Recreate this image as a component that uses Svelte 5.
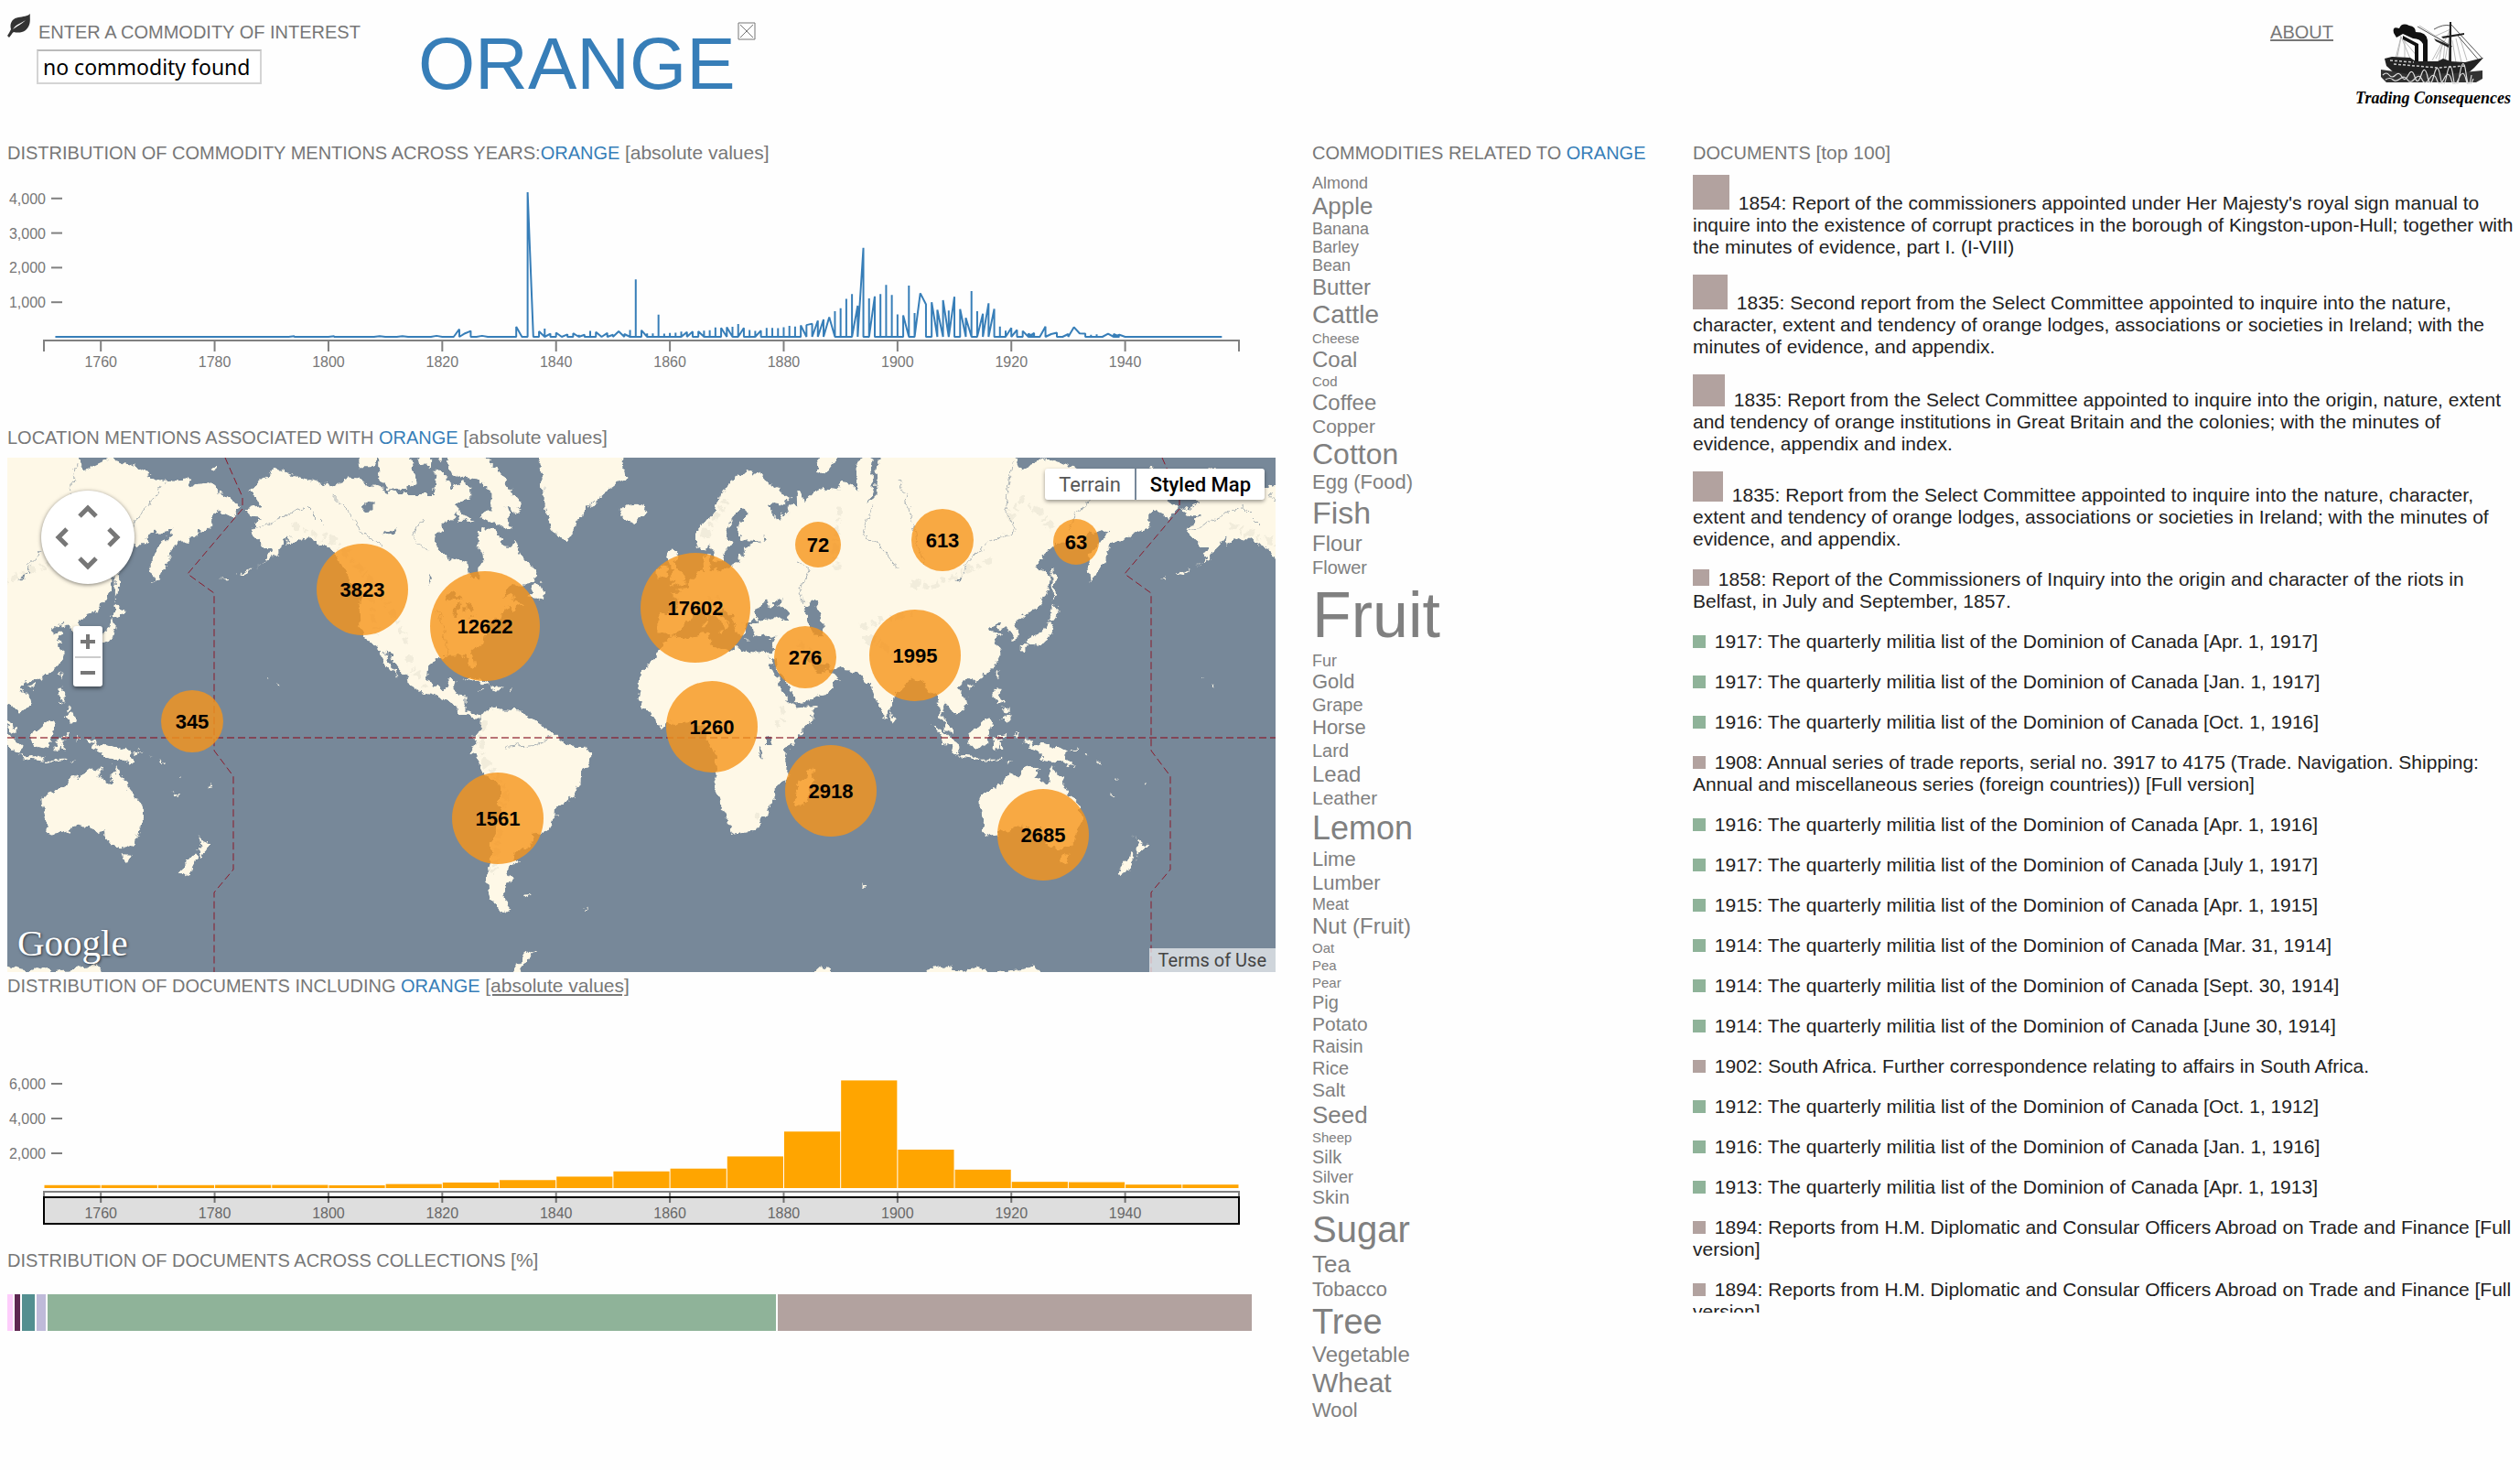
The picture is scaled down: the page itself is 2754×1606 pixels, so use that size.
<script>
	let query = $state('no commodity found');
	const commodity = 'ORANGE';

	const W = 1386;
	const LEFT = 40;
	const YEAR = 1306 / 210;
	const decades = [1760, 1780, 1800, 1820, 1840, 1860, 1880, 1900, 1920, 1940];

	function yearX(year) { return LEFT + (year - 1750) * YEAR; }
	function thousands(n) { return n.toLocaleString('en-US'); }

	// mentions per year: [year, count, shape]
	// shape: i = slopes up from the year before, o = slopes down to the next one,
	// l = plain line point, d = line point that then drops to zero
	const mentions = [
		[1794, 20, 'i'], [1801, 20, 'i'], [1809, 20, 'io'], [1813, 20, 'io'], [1819, 30, 'io'],
		[1823, 220, 'i'], [1824, 100, 'l'], [1825, 170, 'd'], [1827, 30, 'io'], [1833, 290, 'o'],
		[1835, 4180, 'o'], [1837, 160, 'o'], [1838, 240], [1839, 90, 'i'], [1840, 120, 'o'], [1842, 70, 'i'],
		[1843, 100, 'o'], [1844, 60], [1845, 60, 'i'], [1846, 170], [1847, 140, 'o'], [1849, 110, 'i'],
		[1850, 60, 'i'], [1851, 160, 'io'], [1852, 80, 'o'], [1853, 200], [1854, 1660], [1855, 190, 'o'],
		[1856, 100], [1857, 100], [1858, 640], [1859, 90], [1860, 110], [1861, 120], [1862, 150],
		[1863, 140, 'i'], [1864, 150, 'i'], [1865, 160, 'o'], [1866, 180], [1867, 190], [1868, 270],
		[1869, 260, 'o'], [1870, 280, 'o'], [1871, 290], [1872, 370], [1873, 260, 'i'], [1874, 200],
		[1875, 170], [1876, 180, 'i'], [1877, 260], [1878, 260], [1879, 250], [1880, 280], [1881, 320],
		[1882, 300], [1883, 330, 'o'], [1884, 340, 'l'], [1885, 380, 'd'], [1886, 470, 'i'], [1887, 500, 'i'],
		[1888, 570, 'io'], [1889, 740], [1890, 830], [1891, 1100], [1892, 1240], [1893, 900, 'i'],
		[1894, 2570, 'i'], [1895, 1110], [1896, 1170, 'i'], [1897, 1240], [1898, 1500], [1899, 1210],
		[1900, 650], [1901, 620, 'o'], [1902, 1480], [1903, 690], [1904, 1260, 'l'], [1905, 940, 'd'],
		[1906, 1000, 'o'], [1907, 780, 'o'], [1908, 1060, 'o'], [1909, 760], [1910, 1160, 'i'],
		[1911, 800, 'o'], [1912, 550, 'o'], [1913, 1320], [1914, 740], [1915, 670, 'i'], [1916, 970, 'i'],
		[1917, 810, 'i'], [1918, 300], [1919, 180], [1920, 260, 'i'], [1921, 200, 'i'], [1922, 170, 'o'],
		[1923, 90, 'o'], [1924, 110, 'i'], [1926, 300, 'i'], [1927, 80, 'l'], [1928, 120, 'd'],
		[1930, 80, 'i'], [1931, 280, 'l'], [1932, 100, 'l'], [1933, 90, 'd'], [1934, 60], [1935, 70],
		[1937, 90, 'io'], [1938, 80, 'o'], [1939, 60, 'io']
	];

	function mentionY(n) { return 189 - n * 0.0378; }

	const mentionPath = mentions.reduce((path, [year, n, shape = '']) => {
		const x = yearX(year);
		if (shape.includes('i')) path += `L${yearX(year - 1)},189`;
		else if (shape === '' || shape === 'o') path += `L${x},189`;
		path += `L${x},${mentionY(n)}`;
		if (shape === 'l') return path;
		return path + `L${shape.includes('o') ? yearX(year + 1) : x},189`;
	}, `M${yearX(1752)},189`) + `L${yearX(1957)},189`;

	// documents per decade from 1750 on
	const documentCounts = [
		170, 170, 170, 180, 180, 160, 230, 320, 460, 660, 960,
		1120, 1820, 3250, 6190, 2210, 1060, 360, 340, 200, 200
	];

	const collections = [
		{ color: '#fdcdfb', share: 6 },
		{ color: '#5e2751', share: 6 },
		{ color: '#538f90', share: 14 },
		{ color: '#bfbad9', share: 10 },
		{ color: '#8fb399', share: 796 },
		{ color: '#b2a29f', share: 518 }
	];

	const clusters = [
		[388, 144, 50, 3823], [522, 184, 60, 12622], [202, 288, 34, 345], [536, 394, 50, 1561],
		[752, 164, 60, 17602], [770, 294, 50, 1260], [886, 95, 25, 72], [1022, 90, 34, 613],
		[1168, 92, 25, 63], [872, 218, 34, 276], [992, 216, 50, 1995], [900, 364, 50, 2918],
		[1132, 412, 50, 2685]
	];

	// lon,lat outlines
	const land = [
		// Eurasia
		'-9,38.7 -9,43 -2,43.5 -1.2,45 -2,47 -4.6,48.4 -1.5,48.6 -1.5,49.7 1.5,50.1 2,51 4,52 5,53.4 8.5,53.7 8.2,56.5 10.5,57.7 10.5,56 10,54.5 14,54 18.5,54.8 21,55.5 21.5,57.5 24,57.2 23.5,58.8 28,59.6 30,60 25,60.2 22.5,60 21.3,61.5 21.5,63 25.3,65 22,65.8 21,64.8 17.5,62.3 17.2,60.7 18.8,59.8 16.5,58 15.8,56.2 14.2,55.4 12.8,55.5 11.3,58.5 10.5,59.3 8,58.1 5.5,58.8 5,61.8 8.5,63.5 12,65.2 14.5,68 18,69.6 24,71 31,70.4 33,69.4 41,67.5 40,66.2 33,66.6 34.8,64.4 37,64 38,64.8 40.5,64.6 39.8,65.8 42,66.4 44,66 43.8,68.4 46,68.1 46.5,66.8 54,68.8 60,68.5 61,69.8 65,69.3 68,68.3 67,70 67,72 70,73 73,72.5 72.5,71 73.5,68.5 71,66.5 74,67.5 75,72 80,73.5 87,75 100,77 105,77.7 113,76 114,73.8 120,73 127,73.2 130,71 133,71.6 140,72.6 150,71.5 160,69.7 170,70 171,69 178,69.4 180,69 185,67.5 190.3,66.1 187,64.3 181,65.5 179,64.6 179,62.5 174,61.8 170,60 166,60 163,58 163,56 161,55 156.7,51 156,54 156,57 160,59.5 164,62.2 160,61.7 156,61.6 154,59.5 149,59.5 143,59.3 138,57 135.5,54.7 141,53 140.5,50 139,47 135.5,44 131.5,43 130,42 127.5,39.7 129.3,37 129,35.2 126.3,34.6 126.8,37 125,38 125,39.6 121.5,39 122,40.5 119,39.3 118,38.5 119,37.3 122.4,37.2 119.5,35 121.8,32 121.8,30 121,28 118,24.5 114,22.4 110.5,21.2 108,21.6 106,20 105.8,18.8 108.5,16 109.3,12.5 107,10.5 105,8.8 105,10 103,11 101.5,12.7 100.5,13.4 100,12 99.3,9.3 100.5,7.2 103.3,4 104.2,1.4 101,3 100.3,6 98.5,8 98.6,12 97.6,16.5 95,15.8 94.3,18 92,21.5 91,22.5 88,21.7 86.8,20.5 82,16.6 80.2,15.5 80.2,13 79.8,10.4 77.6,8.1 76,11 74.5,14.5 73,18 72.7,21 70,20.9 69,22.3 67,24.8 61.5,25.2 57.3,25.6 56.5,27 52.5,27.5 50,30 48,30 48.3,28 50.2,26.5 51.5,25.8 51.5,24.2 54,24.1 56.3,26 56.8,24 59.8,22.5 57.8,19 55,17 52,15.6 45,12.8 43.3,12.8 42.7,16.5 39.2,21 37,25 34.8,28.2 34.5,29.5 34.3,31.3 35,33 36,36.8 34,36.4 30.5,36.4 27.5,37 26.3,39.4 29,41 31.5,41.3 35,42 38.5,41 41.5,41.6 39,44 37,45.3 39,47.2 35,46.2 36.5,45.4 33.5,44.5 32.6,45.5 33.5,46.1 31,46.6 29.7,45.2 28,43 28.8,41.3 26,40.8 23.5,40.4 24,38 22.8,36.5 21.5,37 19.4,41 19.5,42 15.5,44 13.7,45.4 12.3,45.2 12.5,44 14,42.4 16,41.8 18.4,40 16.8,40.4 17,39 16,38 15.7,40 12.3,41.8 10.5,43 8.8,44.4 6.5,43.1 3.2,43.2 3.2,41.8 0,39.7 0,38.6 -2,36.8 -5.5,36.1 -6.5,37 -9,37',
		// Africa
		'-6,35.8 0,36 10,37.3 11,35 10.3,34 15,32.3 20,31 20,32.8 25,31.6 31,31.5 32.4,31 34.3,31.3 34.6,29.5 34.2,27.8 32.8,29.8 34,27 37,21 37.4,18.8 39.5,15.5 43,12.3 43.5,11.4 51.2,11.9 50.5,9 48,4.5 43,-0.5 39.5,-4.5 39,-7 40.6,-11 40.5,-15 35,-19.8 35.5,-24 33,-25.8 32.5,-28.5 28,-33 25.6,-34 20,-34.8 18.4,-34 17.5,-30.5 15,-26.5 14.4,-22.5 12,-17.5 13.7,-12 12.2,-6 9,-1 9.5,3.5 8.5,4.6 6,4.3 4.3,6.4 1,6 -4,5.3 -7.5,4.4 -13,8.5 -15,11 -17,14.7 -16.2,19 -17,21 -14.5,26 -10,29.3 -9.7,31.5 -6.8,34',
		'49.3,-12 50.4,-15.5 47,-25 44,-25 43.5,-22 44.4,-16.2 47.5,-15',
		// North America
		'-168,65.6 -162,66.3 -164,67.5 -166.5,68.3 -163,69.5 -157,71.3 -150,70.5 -141,69.7 -135,69 -128,70 -124,69.8 -115,68.5 -109,68 -100,68 -96,68 -95,71 -92,71 -88,68.7 -85,69.8 -81.5,69 -81.5,67.3 -86.5,66.3 -87,64.8 -92,63 -94.5,60.5 -94.7,58.8 -92.5,57 -88,56.5 -82.5,55.2 -82,53 -79,51.4 -79,54.5 -76.6,57 -78.5,59 -77.5,62.4 -73.5,62.3 -69.7,61 -69.5,59 -66,58.8 -64.5,60.3 -61.5,57 -57.5,54.5 -56,52 -60,50.2 -66.5,50.2 -70,47.5 -65,49 -64.8,46.5 -61.5,45.8 -66,43.5 -66.5,45 -70,43.7 -70.5,41.8 -74,40.6 -75.5,38 -76,35 -81,31.8 -80.1,26.5 -81,25.2 -82.7,28 -84,30 -89.5,30 -94,29.5 -97.3,27.5 -97.7,22.5 -95.5,18.7 -91,18.6 -90.3,21 -87,21.4 -88.2,16 -83.5,15.5 -83.5,11 -81.5,9 -79.5,9.5 -77.3,8.5 -78,7.5 -80.3,7.5 -83,8.3 -85.7,10 -87.7,13 -92,14.5 -95,16 -99,16.7 -105.3,20 -105.5,22.5 -109.3,26 -113,31 -114.8,31.6 -111,25.5 -109.5,23 -112,25 -115,28 -116.8,32 -120.5,34.5 -124,39.5 -124.3,46.5 -123,49 -127.5,51 -130.3,54.6 -134,58 -139.5,59.7 -146,60.8 -151.5,59.2 -151,61.2 -154,59 -158,56.5 -164,54.6 -160,56 -157.5,58.8 -162,58.8 -162,60 -166,61.7 -164.5,63.1 -161,64.4 -166,64.5',
		'-117,73 -105,73 -102,69.5 -106,68.8 -113,68.6 -117,70',
		'-125,74 -116,73.5 -119,71.5 -124,71.5',
		'-90,74 -80,74 -72,71.5 -67,69 -62,66.7 -64,65 -68,66 -65,62 -69,62.5 -78,64.5 -73,65.5 -73,68 -79,70 -88,70.3 -90,72',
		'-87,65.5 -80,63.8 -86,63.7',
		'-102,73.5 -97,73.5 -97,71.5 -101,72',
		'-95.5,73.8 -90.5,73.8 -93,72',
		'-56,74 -54,70.5 -53.5,67 -50,62 -44,59.9 -41,63 -37,65.7 -30,68 -22,70.2 -23,72 -20,75 -56,75',
		'-24,65.5 -22,66.3 -16,66.4 -13.7,65 -18.5,63.4 -22.5,63.9',
		'-59,47.7 -56,51.5 -53,48.5 -53.5,46.7',
		'-85,22 -82,23.2 -77,21.5 -74.3,20.2 -77.5,19.9 -78,20.8 -82,22.5',
		'-74,18.4 -73,19.9 -68.5,18.6 -71.5,17.7',
		'-78.3,18.4 -76.3,18.1 -77.3,17.8',
		'-67.2,18.5 -65.7,18.4 -67,17.9',
		'-156,20.2 -154.9,19.5 -155.7,18.9',
		'-160,22.2 -159.3,22 -159.8,21.7',
		// Aleutians
		'-165,54.6 -168,53.6 -171,52.8 -168,53',
		'-174,52.4 -177,52 -174,52',
		// South America
		'-77.3,8.5 -75.5,10.7 -72,12 -71,11 -68,11 -62,10.7 -60,8.3 -57,6 -51.5,4.3 -50,1 -48,-1 -44,-2.5 -39.5,-3 -35.2,-5.5 -35,-9 -39,-13 -39.2,-18 -41,-22 -44.5,-23.2 -48.5,-26 -48.7,-28.5 -52,-33 -54.5,-34.9 -58,-34 -57,-36.5 -58,-38.3 -62,-39 -65,-41 -63.7,-42.6 -67.5,-46 -65.8,-47.5 -69,-51 -68.5,-52.5 -65.2,-54.8 -70,-55.3 -74,-52.5 -75.5,-48 -73.5,-42 -73.5,-37.2 -71.5,-32 -70.3,-24 -70.3,-18.3 -76,-14 -79,-8 -81.3,-5 -80,-2.5 -80.3,0.5 -77.5,4 -77.5,7',
		'-61,-51.5 -58,-51.4 -60,-52.3',
		'-38,-54 -36,-54.4 -36,-54.9',
		// British Isles and the Mediterranean
		'-5.5,50.1 1.2,51.2 1.7,52.7 0,53.5 -3,56 -2,57.6 -4,58.6 -5.5,57.5 -5,55 -3,54 -4.5,53 -5,51.8 -3,51.4',
		'-10,51.6 -6.3,52.3 -6,54.5 -7.5,55.2 -10,54',
		'12.5,38 15.5,38.2 15,36.8',
		'8.3,40.8 9.6,41 9.5,39.2 8.5,39',
		'8.7,42.5 9.4,43 9.2,41.5',
		'23.6,35.4 26.2,35.2 24.8,35',
		'32.4,35 34.5,35.6 33,34.6',
		'51.5,71 55,70.7 58,72 62,74.5 56,74.5 53,72.5',
		// Asian islands
		'131,34 136,33.6 140,35 141,36 142,39.5 141,41.4 140,40 139.5,38.5 137,37 133,35.5',
		'140.3,41.5 143.2,42 145.5,43.3 142,45.4 141.3,43',
		'130,33.5 132,33.3 131,31.2 130,32',
		'142,46 143,49 143.2,52 142.8,54.3 141.8,53 142,49',
		'178.5,71.2 182,71.4 181,70.9',
		'120,23.5 121.5,25.2 121,22',
		'108.7,19.5 111,20 110,18.3',
		'120.5,18.5 122.2,18.4 121.8,15.5 124,13 120.7,13.8 120,16',
		'122,7 125.5,9.7 126.5,7 125.3,5.7 124,7',
		'123,11 125,12 125,10.5 123.5,9.5',
		'109,1.5 111,2.5 113,3.3 117,7 119,5.2 117.7,1 116,-3.8 114,-3.6 110.2,-2.8',
		'95.3,5.6 98,4 100.5,2 103.5,-1 106,-3 105.8,-5.8 104,-5.5 100.5,-1.5 98.7,1.7',
		'105.3,-6.8 108.5,-6.7 112.5,-6.9 114.5,-8 114,-8.7 108,-7.8',
		'119,-3.3 120,0.8 125,1.5 123.5,0.4 120.5,0.4 121.5,-1 123.3,-1 121.7,-2 123,-5 121.5,-4.8 120.7,-2.8 120.3,-5.5 119.5,-5.5',
		'115,-8.3 119,-8.3 122.8,-8.3 122.8,-8.9 115,-8.9',
		'124,-10 127,-8.4 125,-8.8',
		'127.5,1.4 128.6,1 128,-0.8',
		'80,9.7 81.8,7.5 80.5,6 79.8,8',
		// Oceania
		'131,-1 134,-0.8 135,-3.3 138,-1.7 145,-4.3 147.8,-6 147,-7 150.5,-10.5 147.5,-10 144,-7.8 142.5,-9.2 138.2,-8.3 138,-6 133,-4 133.8,-2.5 131.5,-1.8',
		'148.5,-5.6 152,-4.2 151,-6',
		'155,-5.5 156,-6.8 155,-6.4',
		'159,-8 161,-9.8 160,-9.8',
		'164,-20.2 167,-22.3 165,-21.6',
		'166.6,-14.8 167.2,-16 166.8,-16',
		'177.3,-17.6 178.6,-17.4 178,-18.3',
		'113.7,-22.5 114,-26 115.7,-31.5 115,-34.3 118,-35 123.5,-33.9 129,-31.7 132,-32 135.5,-34.8 137.8,-32.8 138,-35.6 140.5,-38 143.5,-38.8 146.4,-39 149.9,-37.5 151,-34 153.2,-31 153.3,-26 150.8,-23.3 147.5,-19.5 145.7,-16 143.7,-14.3 142.5,-10.8 141.6,-13.5 140.8,-17.5 139,-17.5 135.5,-15 136.8,-12.2 132.5,-11.3 130,-13.3 128.5,-15 126,-14 122.2,-17.5 119,-20 116,-20.8',
		'144.7,-40.8 148.2,-40.9 147.5,-43.4 146,-43.5',
		'172.8,-34.5 175.5,-36.8 178.4,-37.7 177,-39.5 175.2,-41.6 173.8,-39.4 174.8,-38 174.3,-36',
		'172.7,-40.6 174.2,-41.8 172.7,-43.8 170.6,-46 168.5,-46.6 166.5,-45.8 170,-43',
		'69,-48.8 70.5,-49.3 69.2,-49.6',
		// Antarctica
		'-66,-66.8 -62.5,-64.5 -59,-63.3 -56.5,-63.2 -60,-64.6 -63,-66.8',
		'92,-67 94,-66 100,-65.6 108,-66.3 112,-65.8 118,-66.6 125,-66.2 131,-65.9 135,-65.4 138,-67',
		'50,-66.8 53,-65.7 57,-66.2 58,-67'
	];

	const lakes = [
		'47,45 51,47 53,46.5 51,44.5 53,42 54,40 54,37 50,37.3 49,40 47.5,43',
		'104,51.5 107,52.3 110,55.6 108.5,53.4',
		'31,61 32.7,60.6 31.5,60',
		'-92,46.7 -88,48.6 -84.5,46.6 -88,46.9',
		'-87.8,42 -87.5,44.8 -85,45.9 -86.3,43.5 -86.5,42',
		'-84,46 -80.5,45.5 -81.7,43.3 -83.8,44',
		'-83,41.5 -79,42.8 -81,41.9',
		'-98.5,53.5 -97,50.6 -96.7,52',
		'-124,66 -119,66.8 -119,65.3 -122,65.2',
		'-116,61 -110,62.7 -112,61.3',
		'32,0.5 34,0.3 33.5,-2.5 32,-2.5',
		'29,-3.5 30,-4 31,-8.5 29.8,-6.5'
	];

	const ridges = [
		'-150,63 -140,61 -133,60 -127,56 -122,53 -117,49 -112,44 -108,38 -106,34',
		'-120,48 -119,42 -118,37', '-106,30 -103,24 -99,19',
		'-76,6 -78,-1 -76,-9 -71,-15 -68,-21 -70,-30 -71,-38 -73,-46',
		'70,35 75,35 80,31 86,28 92,28 97,29', '68,39 75,41 82,42 88,43',
		'88,51 95,50 102,52 110,54 118,56', '125,64 130,67 138,65 142,62', '44,34 48,32 53,29',
		'60,66 59,60 59,54', '8,61 12,64 17,67', '6,45 10,46.5 14,47', '38,12 39,8 36,4', '28,-30 30,-27'
	];

	const rivers = [
		'73,66 69,61 76,59 83,54', '83,70 87,66 90,60 93,55', '127,72 124,66 128,62 118,60 108,55',
		'160,69 152,65 148,62', '-135,68 -128,65 -122,61 -115,59', '-165,62 -155,64 -145,66 -138,63',
		'-90,30 -91,37 -94,44', '-51,0 -58,-3 -68,-4', '-100,64 -104,61 -98,58', '47,46 45,49 49,54 44,56'
	];

	// Mercator, one world is 1024 units wide
	function project(outline) {
		return outline.split(' ').map((pair) => {
			const [lon, lat] = pair.split(',').map(Number);
			const px = 738 + (lon * 1024) / 360;
			const py = 306 - 162.97 * Math.log(Math.tan(Math.PI / 4 + (lat * Math.PI) / 360));
			return `${px.toFixed(1)},${py.toFixed(1)}`;
		}).join('L');
	}

	const landPath = land.map((o) => `M${project(o)}Z`).join('');
	const lakePath = lakes.map((o) => `M${project(o)}Z`).join('');
	const ridgePath = ridges.map((o) => `M${project(o)}`).join('');
	const riverPath = rivers.map((o) => `M${project(o)}`).join('');
	const worlds = [-1024, 0, 1024];

	const lineHeights = {
		15: 19, 18: 20, 20: 24, 21: 24, 22: 26, 24: 28, 26: 30, 28: 32, 30: 34, 32: 36, 34: 40, 36: 42,
		38: 44, 40: 46, 70: 80
	};

	const related = [
		['Almond', 18], ['Apple', 26], ['Banana', 18], ['Barley', 18], ['Bean', 18], ['Butter', 24],
		['Cattle', 28], ['Cheese', 15], ['Coal', 24], ['Cod', 15], ['Coffee', 24], ['Copper', 21],
		['Cotton', 32], ['Egg (Food)', 22], ['Fish', 34], ['Flour', 24], ['Flower', 20], ['Fruit', 70],
		['Fur', 18], ['Gold', 22], ['Grape', 20], ['Horse', 22], ['Lard', 20], ['Lead', 24],
		['Leather', 21], ['Lemon', 36], ['Lime', 22], ['Lumber', 22], ['Meat', 18], ['Nut (Fruit)', 24],
		['Oat', 15], ['Pea', 15], ['Pear', 15], ['Pig', 20], ['Potato', 21], ['Raisin', 20], ['Rice', 20],
		['Salt', 21], ['Seed', 26], ['Sheep', 15], ['Silk', 20], ['Silver', 18], ['Skin', 21],
		['Sugar', 40], ['Tea', 26], ['Tobacco', 22], ['Tree', 38], ['Vegetable', 24], ['Wheat', 30],
		['Wool', 22]
	];

	const militia = 'The quarterly militia list of the Dominion of Canada';
	const green = '#8fb399';
	const mauve = '#b2a29f';
	const documents = [
		[1854, "Report of the commissioners appointed under Her Majesty's royal sign manual to inquire into the existence of corrupt practices in the borough of Kingston-upon-Hull; together with the minutes of evidence, part I. (I-VIII)", mauve, 40],
		[1835, 'Second report from the Select Committee appointed to inquire into the nature, character, extent and tendency of orange lodges, associations or societies in Ireland; with the minutes of evidence, and appendix.', mauve, 38],
		[1835, 'Report from the Select Committee appointed to inquire into the origin, nature, extent and tendency of orange institutions in Great Britain and the colonies; with the minutes of evidence, appendix and index.', mauve, 35],
		[1835, 'Report from the Select Committee appointed to inquire into the nature, character, extent and tendency of orange lodges, associations or societies in Ireland; with the minutes of evidence, and appendix.', mauve, 33],
		[1858, 'Report of the Commissioners of Inquiry into the origin and character of the riots in Belfast, in July and September, 1857.', mauve, 18],
		[1917, `${militia} [Apr. 1, 1917]`, green, 14],
		[1917, `${militia} [Jan. 1, 1917]`, green, 14],
		[1916, `${militia} [Oct. 1, 1916]`, green, 14],
		[1908, 'Annual series of trade reports, serial no. 3917 to 4175 (Trade. Navigation. Shipping: Annual and miscellaneous series (foreign countries)) [Full version]', mauve, 14],
		[1916, `${militia} [Apr. 1, 1916]`, green, 14],
		[1917, `${militia} [July 1, 1917]`, green, 14],
		[1915, `${militia} [Apr. 1, 1915]`, green, 14],
		[1914, `${militia} [Mar. 31, 1914]`, green, 14],
		[1914, `${militia} [Sept. 30, 1914]`, green, 14],
		[1914, `${militia} [June 30, 1914]`, green, 14],
		[1902, 'South Africa. Further correspondence relating to affairs in South Africa.', mauve, 14],
		[1912, `${militia} [Oct. 1, 1912]`, green, 14],
		[1916, `${militia} [Jan. 1, 1916]`, green, 14],
		[1913, `${militia} [Apr. 1, 1913]`, green, 14],
		[1894, 'Reports from H.M. Diplomatic and Consular Officers Abroad on Trade and Finance [Full version]', mauve, 14],
		[1894, 'Reports from H.M. Diplomatic and Consular Officers Abroad on Trade and Finance [Full version]', mauve, 14]
	];
</script>

<header>
	<form class="search" onsubmit={(e) => e.preventDefault()}>
		<label for="commodity">
			<svg class="leaf" viewBox="0 0 26 26" aria-hidden="true">
				<path d="M25 0C24 4 27 12 20 18C16 21 11 21 7 20C5 21 4 24 2 26L0 24C2 21 3 19 4 17C2 10 6 5 12 4C17 3 22 3 25 0Z" fill="#333" />
				<path d="M6 17C10 14 15 12 20 7C16 10 10 11 6 17" fill="#fff" />
			</svg>
			<span>ENTER A COMMODITY OF INTEREST</span>
		</label>
		<input id="commodity" type="text" bind:value={query} />
	</form>
	<h1>{commodity}</h1>
	<button class="remove" type="button" aria-label="Remove {commodity}">
		<svg viewBox="0 0 20 20">
			<path d="M1 1H19V19H1ZM3 3L17 17M17 3L3 17" fill="none" stroke="#777" />
		</svg>
	</button>
	<a class="about" href="#about">ABOUT</a>
	<div class="logo">
		<svg viewBox="0 0 174 68" aria-hidden="true">
			<g fill="none" stroke-width="1">
				<path d="M46 40L52 16L62 40M50 14L70 38M52 17L48 38M56 20L56 40M86 42L98 20L93 44M72 4L100 22L98 44M88 16L106 8L90 40M106 10L100 42M112 18L118 44M116 16L124 42M108 20L112 44" stroke="#bbb" />
				<path d="M70 5L108 27M106 2L141 40M114 15L138 43M88 8Q98 2 106 4" stroke="#555" />
			</g>
			<path d="M44 12Q42 4 50 7Q53 0 61 4Q68 5 68 11Q80 11 81 20V46H76V24Q73 18 65 18L54 13L47 17Z" fill="#111" />
			<path d="M54 15L71 24V46H67V26L54 19Z" fill="#111" />
			<path d="M105 0H107V46H104ZM96 16L121 12V14L98 18ZM88 18L104 25V28L90 21Z" fill="#222" />
			<path d="M34 40L42 38L62 39L68 43H92L98 40L106 43L122 44L142 39L132 50L124 57H46L36 48Z" fill="#222" />
			<path d="M40 42L66 44M44 46L92 50L122 48" stroke="#ccc" stroke-width="1.5" stroke-dasharray="3 2" fill="none" />
			<path d="M30 52L44 54L60 57L110 56L141 53V62L134 66H36L30 60Z" fill="#333" />
			<path d="M32 58q4 -4 7 0t7 0t7 2t7 -2t7 2t7 -2t7 2t7 -2t7 2t7 -2t7 2t7 -2t7 -2t6 2M35 63q5 -3 8 0t8 -1t8 1t8 -1t8 1t8 -1t8 1t8 -1t8 1t8 -1t8 1t8 -1" stroke="#ddd" stroke-width="1.2" fill="none" />
		</svg>
		<span>Trading Consequences</span>
	</div>
</header>

<main>
	<div class="charts">
		<section class="mentions">
			<h2>DISTRIBUTION OF COMMODITY MENTIONS ACROSS YEARS:<b>{commodity}</b> <span>[absolute values]</span></h2>
			<svg viewBox="0 0 {W} 287">
				{#each [1000, 2000, 3000, 4000] as n}
					<line class="axis" x1="48" y1={mentionY(n)} x2="60" y2={mentionY(n)} />
					<text x="42" y={mentionY(n) + 6} text-anchor="end">{thousands(n)}</text>
				{/each}
				<path class="axis" d="M{LEFT},205V193H{yearX(1960)}V205" />
				{#each decades as year}
					<line class="axis" x1={yearX(year)} y1="193" x2={yearX(year)} y2="205" />
					<text x={yearX(year)} y="222" text-anchor="middle">{year}</text>
				{/each}
				<path d={mentionPath} fill="none" stroke="#377eb8" stroke-width="2" stroke-linejoin="bevel" />
			</svg>
		</section>

		<section class="locations">
			<h2>LOCATION MENTIONS ASSOCIATED WITH <b>{commodity}</b> <span>[absolute values]</span></h2>
			<div class="map">
				<svg viewBox="0 0 {W} 562">
					<defs>
						<filter id="coast" x="0" y="0" width="100%" height="100%">
							<feTurbulence type="fractalNoise" baseFrequency="0.11" numOctaves="4" seed="4" />
							<feDisplacementMap in="SourceGraphic" scale="11" xChannelSelector="R" yChannelSelector="G" />
						</filter>
					</defs>
					<rect width={W} height="562" fill="#778899" />
					<g filter="url(#coast)">
						<rect width={W} height="562" fill="#778899" />
						{#each worlds as shift}
							<g transform="translate({shift} 0)">
								<path d={landPath} fill="#fef8e7" />
								<path d={ridgePath} fill="none" stroke="#f1ecdb" stroke-width="7" stroke-dasharray="9 5 3 4" />
								<path d={riverPath} fill="none" stroke="#a9b1b5" stroke-width="1" />
								<path d={lakePath} fill="#778899" />
							</g>
						{/each}
					</g>
					<line class="meridian" x1="0" y1="306" x2={W} y2="306" stroke-width="2" opacity="0.6" />
					{#each [0, 1024] as shift}
						<path class="meridian" transform="translate({shift} 0)" d="M238,0L257,43V56L197,127L226,148V320L247,348V450L226,475V562" />
					{/each}
					{#each clusters as [cx, cy, r, count]}
						<circle {cx} {cy} {r} fill="rgb(246,149,26)" fill-opacity="0.8" />
						<text class="count" x={cx} y={cy + 8} text-anchor="middle">{count}</text>
					{/each}
				</svg>
				<div class="pan">
					<button type="button" class="up" aria-label="Pan up"><svg viewBox="0 0 24 24"><path d="M3 16L12 7L21 16" /></svg></button>
					<button type="button" class="left" aria-label="Pan left"><svg viewBox="0 0 24 24"><path d="M16 3L7 12L16 21" /></svg></button>
					<button type="button" class="right" aria-label="Pan right"><svg viewBox="0 0 24 24"><path d="M8 3L17 12L8 21" /></svg></button>
					<button type="button" class="down" aria-label="Pan down"><svg viewBox="0 0 24 24"><path d="M3 8L12 17L21 8" /></svg></button>
				</div>
				<div class="zoom">
					<button type="button" aria-label="Zoom in"><svg viewBox="0 0 16 16"><path d="M0 8H16M8 0V16" /></svg></button>
					<button type="button" aria-label="Zoom out"><svg viewBox="0 0 16 16"><path d="M0 8H16" /></svg></button>
				</div>
				<div class="maptype">
					<button type="button">Terrain</button>
					<button type="button" class="active">Styled Map</button>
				</div>
				<span class="google">Google</span>
				<a class="terms" href="#terms">Terms of Use</a>
			</div>
		</section>

		<section class="documents-chart">
			<h2>DISTRIBUTION OF DOCUMENTS INCLUDING <b>{commodity}</b> <a href="#values">[absolute values]</a></h2>
			<svg viewBox="0 0 {W} 276">
				{#each [2000, 4000, 6000] as n}
					<line class="axis" x1="48" y1={209 - n * 0.019} x2="60" y2={209 - n * 0.019} />
					<text x="42" y={215 - n * 0.019} text-anchor="end">{thousands(n)}</text>
				{/each}
				{#each documentCounts as n, i}
					<rect x={yearX(1750 + i * 10) + 0.5} y={209 - n * 0.019} width={YEAR * 10 - 1} height={n * 0.019} fill="orange" />
				{/each}
				<path class="axis" d="M{LEFT},225V213H{yearX(1960)}V225" />
				{#each decades as year}
					<line class="axis" x1={yearX(year)} y1="213" x2={yearX(year)} y2="225" />
					<text x={yearX(year)} y="242" text-anchor="middle">{year}</text>
				{/each}
				<rect x={LEFT} y="219" width="1306" height="29" fill="#000" fill-opacity="0.125" stroke="#000" stroke-width="2" />
			</svg>
		</section>

		<section>
			<h2>DISTRIBUTION OF DOCUMENTS ACROSS COLLECTIONS <span>[%]</span></h2>
			<div class="collections">
				{#each collections as c}
					<div style="flex-grow: {c.share}; background: {c.color}"></div>
				{/each}
			</div>
		</section>
	</div>

	<section class="related">
		<h2>COMMODITIES RELATED TO <b>{commodity}</b></h2>
		<ul>
			{#each related as [name, size]}
				<li style="font-size: {size}px; line-height: {lineHeights[size]}px"><a href="#{name}">{name}</a></li>
			{/each}
		</ul>
	</section>

	<section class="documents">
		<h2>DOCUMENTS <span>[top 100]</span></h2>
		<ul>
			{#each documents as [year, title, color, size]}
				<li><i style="width: {size}px; height: {size}px; background: {color}"></i> {year}: {title}</li>
			{/each}
		</ul>
	</section>
</main>

<style>
	:global(body) {
		background: #fefefe;
		color: #777;
		font-family: "Liberation Sans", Arial, sans-serif;
		font-size: 20px;
		line-height: 24px;
	}
	a {
		color: inherit;
	}
	button {
		border: 0;
		padding: 0;
		background: none;
		cursor: pointer;
	}
	svg {
		display: block;
		width: 100%;
		height: auto;
	}
	ul {
		list-style: none;
		margin: 0;
		padding: 0;
	}
	h1 {
		margin: 30px 0 0 63px;
		color: #377eb8;
		font-size: 80px;
		font-weight: 400;
		line-height: 80px;
	}
	h2 {
		height: 24px;
		margin: 0;
		font-size: 20px;
		font-weight: 400;
	}
	h2 b {
		color: #377eb8;
		font-weight: 400;
	}
	h2 span,
	h2 a {
		font-size: 21px;
	}

	header {
		display: flex;
		align-items: flex-start;
		padding: 0 8px;
		min-height: 155px;
	}
	.search {
		padding-top: 15px;
	}
	.search label {
		display: flex;
		gap: 8px;
		height: 32px;
	}
	.search label span {
		align-self: flex-end;
	}
	.leaf {
		width: 26px;
		height: 26px;
	}
	.search input {
		box-sizing: border-box;
		display: block;
		width: 246px;
		height: 38px;
		margin: 7px 0 0 32px;
		padding: 0 5px;
		border: 2px solid #d4d4d4;
		border-top-color: #bbb;
		background: #fff;
		color: #000;
		font-family: "Noto Sans", sans-serif;
		font-size: 23px;
	}
	.remove {
		width: 20px;
		height: 20px;
		margin: 24px 0 0 2px;
	}
	.about {
		margin: 23px 22px 0 auto;
	}
	.logo {
		width: 174px;
		padding-top: 24px;
		color: #000;
		text-align: center;
	}
	.logo span {
		display: block;
		margin-top: 3px;
		font-family: "Liberation Serif", serif;
		font-size: 18px;
		font-style: italic;
		font-weight: 700;
		white-space: nowrap;
	}

	main {
		display: grid;
		grid-template-columns: 1386fr 376fr 904fr;
		column-gap: 40px;
		padding-left: 8px;
	}
	.axis {
		fill: none;
		stroke: #808080;
		stroke-width: 2;
	}
	text {
		fill: #777;
		font-size: 16px;
	}
	.locations h2 {
		margin-bottom: 10px;
	}
	.documents-chart {
		padding-top: 3px;
	}

	.map {
		position: relative;
		overflow: hidden;
		font-family: Roboto, sans-serif;
	}
	.meridian {
		fill: none;
		stroke: #8b1a2b;
		stroke-dasharray: 8 4;
	}
	.count {
		fill: #000;
		font-family: "Liberation Sans", Arial, sans-serif;
		font-size: 22px;
		font-weight: 700;
	}
	.map button svg {
		fill: none;
		stroke: #777;
		stroke-width: 5;
	}
	.pan {
		position: absolute;
		top: 36px;
		left: 37px;
		display: grid;
		grid-template: repeat(3, 24px) / repeat(3, 24px);
		gap: 3px;
		padding: 12px;
		border-radius: 50%;
		background: #fff;
		box-shadow: 0 1px 4px rgba(0, 0, 0, 0.5);
	}
	.up { grid-area: 1 / 2; }
	.left { grid-area: 2 / 1; }
	.right { grid-area: 2 / 3; }
	.down { grid-area: 3 / 2; }
	.zoom {
		position: absolute;
		top: 184px;
		left: 72px;
		width: 32px;
		border-radius: 3px;
		background: #fff;
		box-shadow: 0 2px 4px rgba(0, 0, 0, 0.5);
	}
	.zoom button {
		display: block;
		width: 28px;
		height: 33px;
		margin: 0 2px;
		padding: 0 6px;
	}
	.zoom button + button {
		border-top: 2px solid #ccc;
	}
	.zoom button svg {
		stroke-width: 4;
	}
	.maptype {
		position: absolute;
		top: 12px;
		right: 12px;
		display: flex;
		border-radius: 3px;
		background: #fff;
		box-shadow: 0 2px 4px rgba(0, 0, 0, 0.4);
	}
	.maptype button {
		height: 34px;
		padding: 0 15px;
		color: #565656;
		font-family: Roboto, sans-serif;
		font-size: 22px;
	}
	.maptype .active {
		border-left: 2px solid #778899;
		color: #000;
		font-weight: 500;
	}
	.google {
		position: absolute;
		bottom: 8px;
		left: 11px;
		color: #fff;
		font-family: "Liberation Serif", serif;
		font-size: 41px;
		line-height: 48px;
		text-shadow: 1px 1px 3px rgba(0, 0, 0, 0.6);
	}
	.terms {
		position: absolute;
		right: 0;
		bottom: 0;
		padding: 1px 10px;
		background: rgba(255, 255, 255, 0.65);
		color: #444;
		text-decoration: none;
	}

	.collections {
		display: flex;
		gap: 2px;
		height: 40px;
		margin: 25px 26px 0 0;
	}

	.related ul {
		margin-top: 11px;
		color: #808080;
	}
	.related a {
		text-decoration: none;
	}

	.documents ul {
		max-height: calc(100vh - 363px);
		margin-top: 12px;
		overflow: hidden;
		color: #222;
		font-size: 21px;
	}
	.documents li {
		margin-bottom: 20px;
	}
	.documents i {
		display: inline-block;
		margin: -2px 4px 0 0;
	}
</style>
